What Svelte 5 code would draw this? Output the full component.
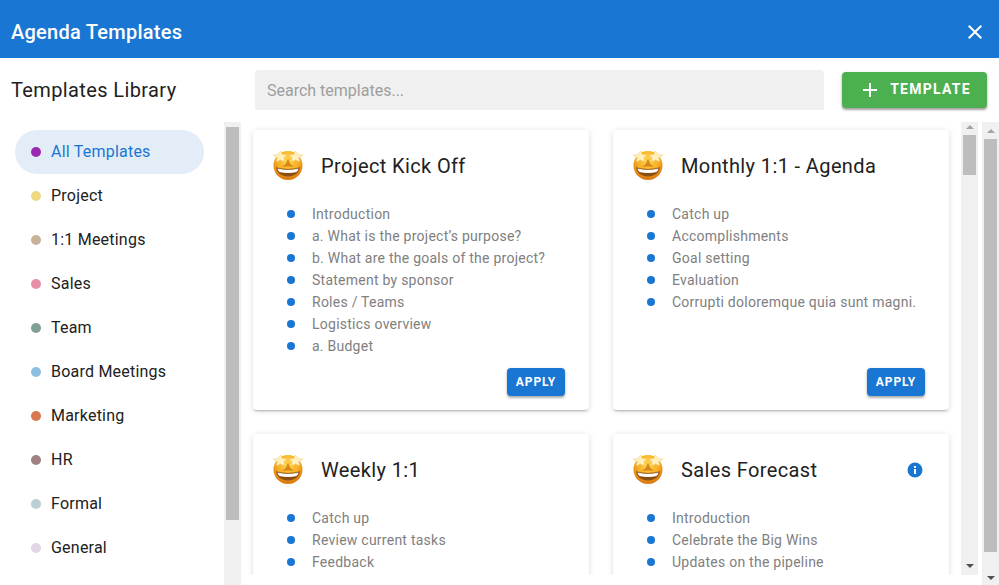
<script>
  const categories = [
    { name: 'All Templates', color: '#9c27b0', active: true },
    { name: 'Project', color: '#ecd980' },
    { name: '1:1 Meetings', color: '#c8b299' },
    { name: 'Sales', color: '#e78fa8' },
    { name: 'Team', color: '#7f9f97' },
    { name: 'Board Meetings', color: '#8fbfdf' },
    { name: 'Marketing', color: '#d9784f' },
    { name: 'HR', color: '#a08080' },
    { name: 'Formal', color: '#bccfd2' },
    { name: 'General', color: '#e2d5e6' }
  ];

  const templates = [
    {
      title: 'Project Kick Off',
      apply: true,
      items: [
        'Introduction',
        'a. What is the project’s purpose?',
        'b. What are the goals of the project?',
        'Statement by sponsor',
        'Roles / Teams',
        'Logistics overview',
        'a. Budget'
      ]
    },
    {
      title: 'Monthly 1:1 - Agenda',
      apply: true,
      items: [
        'Catch up',
        'Accomplishments',
        'Goal setting',
        'Evaluation',
        'Corrupti doloremque quia sunt magni.'
      ]
    },
    {
      title: 'Weekly 1:1',
      items: ['Catch up', 'Review current tasks', 'Feedback']
    },
    {
      title: 'Sales Forecast',
      info: true,
      items: ['Introduction', 'Celebrate the Big Wins', 'Updates on the pipeline']
    }
  ];
</script>

{#snippet starEyes()}
  <svg class="emoji" viewBox="0 0 32 32" aria-hidden="true">
    <defs>
      <radialGradient id="face" cx="50%" cy="30%" r="72%">
        <stop offset="0" stop-color="#ffd84e" />
        <stop offset="0.5" stop-color="#f8b128" />
        <stop offset="1" stop-color="#d56f08" />
      </radialGradient>
    </defs>
    <circle cx="16" cy="16.500" r="14.500" fill="url(#face)" />
    <path d="M16 9.500l2.200 5.500 3.300 2.500H10.500l3.300-2.500z" fill="#d07a12" opacity=".85" />
    <path d="M4 18.300C7.500 19.400 11.500 20 16 20s8.500-.6 12-1.700C27 24 22.500 27.500 16 27.500S5 24 4 18.300z" fill="#8a4d12" />
    <path d="M5.500 19.400c3.200.9 6.700 1.300 10.500 1.300s7.300-.4 10.500-1.300c-.4 1.500-1 2.700-1.900 3.700-2.600.6-5.400.9-8.600.9s-6-.3-8.600-.9c-.9-1-1.500-2.200-1.900-3.700z" fill="#fff" />
    <path d="M8.500 2l1.900 3.400 4.700.6-3.200 2.800.9 4.200-4.300-2.100L4.200 13l1-4.300L1 6.200l5.200-.8z" fill="#fff0bd" stroke="#eeba58" stroke-width=".4" />
    <path d="M23.500 2l2.300 3.400 5.200.8-4.200 2.500 1 4.300-4.300-2.100-4.300 2.100.9-4.200L16.900 6l4.700-.6z" fill="#fff0bd" stroke="#eeba58" stroke-width=".4" />
  </svg>
{/snippet}

{#snippet scrollbar(kind)}
  <div class="scrollbar {kind}">
    <span class="arrow up"></span>
    <span class="thumb"></span>
    <span class="arrow down"></span>
  </div>
{/snippet}

<div class="dialog">
  <header class="titlebar">
    <h1>Agenda Templates</h1>
    <button class="close" aria-label="Close">
      <svg viewBox="0 0 24 24" width="24" height="24"><path d="M19 6.410 17.590 5 12 10.590 6.410 5 5 6.410 10.590 12 5 17.590 6.410 19 12 13.410 17.590 19 19 17.590 13.410 12z" fill="#fff" /></svg>
    </button>
  </header>

  <div class="body">
    <aside class="sidebar">
      <h2>Templates Library</h2>
      <div class="side-scroll">
        <ul class="categories">
          {#each categories as cat}
            <li class:active={cat.active}>
              <span class="dot" style="background: {cat.color}"></span>
              {cat.name}
            </li>
          {/each}
        </ul>
        <div class="side-track"><span class="side-thumb"></span></div>
      </div>
    </aside>

    <main class="main">
      <div class="toolbar">
        <input type="text" placeholder="Search templates..." />
        <button class="add">
          <svg viewBox="0 0 24 24" width="24" height="24"><path d="M19 13h-6v6h-2v-6H5v-2h6V5h2v6h6z" fill="#fff" /></svg>
          Template
        </button>
      </div>

      <div class="content">
        <div class="cards-wrap">
          <div class="cards">
            {#each templates as tpl}
              <article class="card">
                <div class="card-head">
                  {@render starEyes()}
                  <h3>{tpl.title}</h3>
                  {#if tpl.info}
                    <svg class="info" viewBox="0 0 16 16" aria-hidden="true">
                      <circle cx="8" cy="8" r="7.500" fill="#1976d2" />
                      <rect x="7" y="7" width="2" height="5" fill="#fff" />
                      <rect x="7" y="4" width="2" height="2" fill="#fff" />
                    </svg>
                  {/if}
                </div>
                <ul class="items">
                  {#each tpl.items as item}
                    <li>{item}</li>
                  {/each}
                </ul>
                {#if tpl.apply}
                  <button class="apply">Apply</button>
                {/if}
              </article>
            {/each}
          </div>
        </div>
        {@render scrollbar('inner')}
        {@render scrollbar('outer')}
      </div>
    </main>
  </div>
</div>

<style>
  :global(body) {
    margin: 0;
    background: #fff;
  }

  .dialog {
    width: 999px;
    height: 585px;
    display: flex;
    flex-direction: column;
    overflow: hidden;
    font-family: Roboto, "Liberation Sans", sans-serif;
    color: #212121;
  }

  .titlebar {
    flex: none;
    height: 58px;
    background: #1976d2;
    display: flex;
    align-items: center;
    justify-content: space-between;
    padding: 6px 12px 0 11px;
    box-sizing: border-box;
  }

  h1 {
    margin: 0;
    font-size: 20px;
    font-weight: 500;
    letter-spacing: 0.25px;
    color: #fff;
  }

  .close {
    border: 0;
    padding: 0;
    background: none;
    display: flex;
  }

  .body {
    flex: 1;
    min-height: 0;
    display: flex;
  }

  .sidebar {
    flex: none;
    width: 241px;
    display: flex;
    flex-direction: column;
  }

  h2 {
    margin: 0;
    height: 64px;
    padding-left: 11px;
    display: flex;
    align-items: center;
    font-size: 20px;
    font-weight: 400;
    letter-spacing: 0.38px;
  }

  .side-scroll {
    flex: 1;
    min-height: 0;
    display: flex;
    justify-content: space-between;
  }

  .categories {
    list-style: none;
    margin: 0;
    padding: 8px 0 0 15px;
    width: 189px;
  }

  .categories li {
    height: 44px;
    box-sizing: border-box;
    display: flex;
    align-items: center;
    gap: 10px;
    padding: 0 0 2px 16px;
    border-radius: 22px;
    font-size: 16px;
    font-weight: 400;
    letter-spacing: 0.22px;
  }

  .categories li.active {
    background: #e3edf8;
    color: #1976d2;
  }

  .dot {
    width: 10px;
    height: 10px;
    margin-top: 2px;
    border-radius: 50%;
  }

  .side-track {
    width: 17px;
    background: #f0f0f0;
    padding: 5px 2px 0;
    box-sizing: border-box;
  }

  .side-thumb {
    display: block;
    height: 393px;
    background: #bdbdbd;
  }

  .main {
    flex: 1;
    min-width: 0;
    display: flex;
    flex-direction: column;
  }

  .toolbar {
    flex: none;
    height: 64px;
    display: flex;
    align-items: center;
    padding: 0 12px 0 14px;
    gap: 18px;
    box-sizing: border-box;
  }

  input {
    flex: 1;
    min-width: 0;
    height: 40px;
    box-sizing: border-box;
    border: 0;
    border-radius: 4px 4px 0 0;
    background: #f0f0f0;
    padding: 0 12px;
    font: 400 16px Roboto, sans-serif;
    color: #212121;
  }

  input::placeholder {
    color: #9e9e9e;
    opacity: 1;
  }

  .add {
    flex: none;
    width: 145px;
    height: 36px;
    border: 0;
    border-radius: 4px;
    background: #4caf50;
    color: #fff;
    display: flex;
    align-items: center;
    justify-content: center;
    gap: 8px;
    padding: 0 0 2px;
    font: 700 14px Roboto, sans-serif;
    letter-spacing: 1.25px;
    text-transform: uppercase;
    box-shadow: 0 2px 2px rgba(0, 0, 0, 0.3), 0 1px 4px rgba(0, 0, 0, 0.12);
  }

  .add svg {
    margin-top: 2px;
  }

  .content {
    flex: 1;
    min-height: 0;
    display: flex;
  }

  .cards-wrap {
    flex: 1;
    min-width: 0;
    height: 453px;
    overflow: hidden;
  }

  .cards {
    display: grid;
    grid-template-columns: 336px 336px;
    grid-auto-rows: 280px;
    gap: 24px;
    padding: 8px 12px 8px 12px;
  }

  .card {
    position: relative;
    background: #fff;
    border-radius: 4px;
    box-shadow: 0 2px 2px -1px rgba(0, 0, 0, 0.25), 0 1px 6px rgba(0, 0, 0, 0.13);
    padding: 20px 19px 0 19px;
    box-sizing: border-box;
  }

  .card-head {
    display: flex;
    align-items: center;
    height: 32px;
  }

  .emoji {
    flex: none;
    width: 32px;
    height: 32px;
    margin-top: -3px;
  }

  h3 {
    margin: 0 0 0 17px;
    flex: 1;
    font-size: 20px;
    font-weight: 400;
    letter-spacing: 0.38px;
    color: #212121;
  }

  .info {
    width: 16px;
    height: 16px;
    margin-right: 7px;
  }

  .items {
    list-style: none;
    margin: 21px 0 0;
    padding: 0 0 0 15px;
  }

  .items li {
    height: 22px;
    line-height: 22px;
    display: flex;
    align-items: center;
    gap: 17px;
    font-size: 14px;
    letter-spacing: 0.25px;
    color: #808080;
    white-space: nowrap;
  }

  .items li::before {
    content: '';
    flex: none;
    width: 8px;
    height: 8px;
    border-radius: 50%;
    background: #1976d2;
  }

  .apply {
    position: absolute;
    right: 24px;
    bottom: 14px;
    width: 58px;
    height: 28px;
    border: 0;
    border-radius: 4px;
    padding: 0;
    background: #1976d2;
    color: #fff;
    font: 700 12px Roboto, sans-serif;
    letter-spacing: 0.9px;
    text-transform: uppercase;
    box-shadow: 0 2px 2px rgba(0, 0, 0, 0.25), 0 1px 4px rgba(0, 0, 0, 0.12);
  }

  .scrollbar {
    flex: none;
    width: 17px;
    box-sizing: border-box;
    background: #f0f0f0;
    display: flex;
    flex-direction: column;
    align-items: center;
    padding: 0 2px;
  }

  .scrollbar.inner {
    height: 453px;
    margin-right: 4px;
  }

  .thumb {
    width: 100%;
    margin-top: 6px;
    margin-bottom: auto;
    background: #bdbdbd;
  }

  .inner .thumb {
    height: 40px;
  }

  .outer .thumb {
    height: 413px;
  }

  .arrow {
    flex: none;
    width: 0;
    height: 0;
    border-left: 4px solid transparent;
    border-right: 4px solid transparent;
  }

  .arrow.up {
    margin-top: 3px;
    border-bottom: 4px solid #a3a3a3;
  }

  .outer .arrow.up {
    margin-top: 7px;
  }

  .arrow.down {
    margin-bottom: 7px;
    border-top: 4px solid #505050;
  }

  .outer .arrow.down {
    margin-bottom: 5px;
  }
</style>
